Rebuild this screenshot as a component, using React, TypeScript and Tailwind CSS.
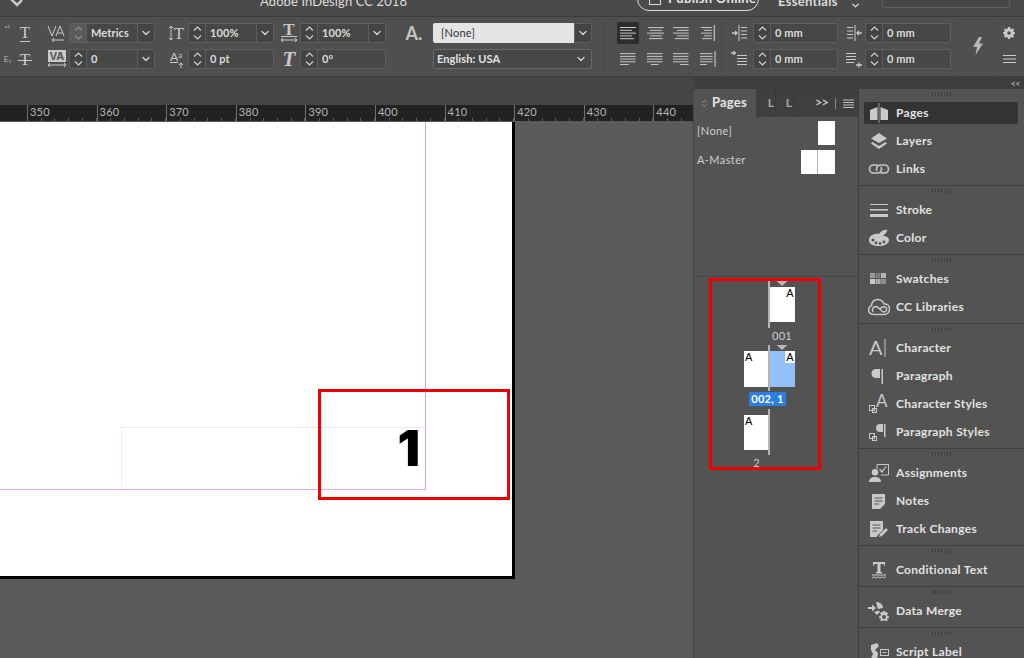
import { ReactNode } from "react";
import { ChevronDown, ChevronsUpDown } from "lucide-react";

const iconFill = "#c9c9c9";

function Spinner({ dim = false }: { dim?: boolean }) {
  return (
    <div className={`w-[17px] h-full flex flex-col items-center justify-center border-r border-[#5e5e5e] rounded-l-[2px] ${dim ? "bg-[#5a5a5a] text-[#8c8c8c]" : "bg-[#444444] text-[#d0d0d0]"}`}>
      <svg width="11" height="16" viewBox="0 0 11 16" fill="none" stroke="currentColor" strokeWidth="1.2">
        <path d="M2 5.5 5.5 2 9 5.5M2 10.5 5.5 14 9 10.5" />
      </svg>
    </div>
  );
}

function Chev() {
  return (
    <div className="w-[17px] h-full flex items-center justify-center border-l border-[#5e5e5e] bg-[#444444]">
      <ChevronDown size={12} strokeWidth={2.5} className="text-[#d8d8d8]" />
    </div>
  );
}

function Field({ value, chevron = false, dim = false, w = 86 }: { value: string; chevron?: boolean; dim?: boolean; w?: number }) {
  return (
    <div style={{ width: w }} className="h-5 flex items-center border border-[#5e5e5e] rounded-[2px] bg-[#474747] overflow-hidden">
      <Spinner dim={dim} />
      <span className="flex-1 pl-[4px] text-[11px] font-bold text-[#dcdcdc] tracking-[0.1px] whitespace-nowrap">{value}</span>
      {chevron && <Chev />}
    </div>
  );
}

function Col({ className = "", children }: { className?: string; children: ReactNode }) {
  return <div className={`flex flex-col gap-[6px] shrink-0 ${className}`}>{children}</div>;
}

function Slot({ children }: { children: ReactNode }) {
  return <div className="h-5 flex items-center justify-center text-[#c9c9c9]">{children}</div>;
}

// text alignment icon, each entry is one line [from, to]
function Lines({ rows, bar }: { rows: number[][]; bar?: boolean }) {
  return (
    <svg width="18" height="16" viewBox="0 0 18 16" stroke={iconFill} strokeWidth="1">
      {rows.map((r, i) => (
        <path key={i} d={`M${r[0]} ${2.5 + i * 2.8}H${r[1]}`} />
      ))}
      {bar && <path d="M16.5 0V16" strokeWidth="1.2" />}
    </svg>
  );
}

function Indent({ flip = false, low = false }: { flip?: boolean; low?: boolean }) {
  return (
    <svg width="18" height="18" viewBox="0 0 18 18" stroke={iconFill} strokeWidth="1" fill="none">
      <g transform={flip ? "translate(18 0) scale(-1 1)" : undefined}>
        {low ? (
          <>
            <path d="M6 5.5H16M6 8.5H16M6 11.5H16M6 14.5H16" />
            <path d="M0 3H5M3 1V5" strokeWidth="1.3" />
          </>
        ) : (
          <>
            <path d="M1 9H6M4 7 6 9 4 11" strokeWidth="1.3" />
            <path d="M8 1V17" />
            <path d="M10 3.5H16M10 7H16M10 10.5H16M10 14H16" />
          </>
        )}
      </g>
    </svg>
  );
}

function ControlBar() {
  return (
    <div className="h-[61px] bg-[#4f4f4f] border-t border-[#3b3b3b] border-b border-b-[#3d3d3d] pt-[6px] flex overflow-hidden shrink-0">
      <Col className="w-[17px] -ml-[3px]">
        <Slot><span className="text-[8px] text-[#bbb] -mt-2 pl-1">ᵃ¹</span></Slot>
        <Slot><span className="text-[8px] text-[#bbb] pl-1">E₁</span></Slot>
      </Col>
      <Col className="w-[16px] ml-[3px]">
        <Slot>
          <span className="text-[17px] leading-none font-['Liberation_Serif',serif] border-b border-[#c9c9c9]">T</span>
        </Slot>
        <Slot>
          <span className="relative text-[17px] leading-none font-['Liberation_Serif',serif]">
            T
            <span className="absolute left-[-2px] right-[-2px] top-[9px] h-px bg-[#c9c9c9]" />
          </span>
        </Slot>
      </Col>
      <Col className="w-[20px] ml-[14px]">
        <Slot>
          <svg width="20" height="20" viewBox="0 0 20 20" fill="none" stroke={iconFill} strokeWidth="1">
            <path d="M1 3 5 13 9 3M9 13 13 3 17 13M10.5 10H15.5M5 17H17M7 15 5 17 7 19" />
          </svg>
        </Slot>
        <Slot>
          <div className="flex flex-col items-center">
            <span className="bg-[#c9c9c9] text-[#4f4f4f] text-[11px] leading-[12px] font-bold px-[2px] font-['Liberation_Sans',sans-serif]">VA</span>
            <svg width="20" height="6" viewBox="0 0 20 6" fill="none" stroke={iconFill}>
              <path d="M1 3H19M3 1 1 3 3 5M17 1 19 3 17 5" />
            </svg>
          </div>
        </Slot>
      </Col>
      <Col className="ml-[2px]">
        <Field value="Metrics" chevron dim />
        <Field value="0" chevron />
      </Col>
      <Col className="w-[18px] ml-[12px]">
        <Slot>
          <div className="flex items-center">
            <svg width="6" height="16" viewBox="0 0 6 16" fill="none" stroke={iconFill}>
              <path d="M3 1V15M1 3 3 1 5 3M1 13 3 15 5 13" />
            </svg>
            <span className="text-[17px] leading-none font-['Liberation_Serif',serif]">T</span>
          </div>
        </Slot>
        <Slot>
          <div className="flex flex-col items-center">
            <div className="flex items-start leading-none">
              <span className="text-[12px] leading-[11px] border-b border-[#c9c9c9]">A</span>
              <span className="text-[8px] leading-[8px]">a</span>
            </div>
            <svg width="18" height="5" viewBox="0 0 18 5" fill="none" stroke={iconFill}>
              <path d="M14 5V0M12 2 14 0 16 2" />
            </svg>
          </div>
        </Slot>
      </Col>
      <Col className="ml-[3px]">
        <Field value="100%" chevron />
        <Field value="0 pt" />
      </Col>
      <Col className="w-[18px] ml-[6px]">
        <Slot>
          <div className="flex flex-col items-center">
            <span className="text-[17px] leading-[13px] font-bold font-['Liberation_Serif',serif] border-b border-[#c9c9c9] px-[2px]">T</span>
            <svg width="18" height="6" viewBox="0 0 18 6" fill="none" stroke={iconFill}>
              <path d="M1 3H17M3 1 1 3 3 5M15 1 17 3 15 5" />
            </svg>
          </div>
        </Slot>
        <Slot>
          <span className="text-[21px] leading-none italic font-bold font-['Liberation_Serif',serif]">T</span>
        </Slot>
      </Col>
      <Col className="ml-[2px]">
        <Field value="100%" chevron />
        <Field value="0°" />
      </Col>
      <Col className="w-[20px] ml-[18px]">
        <Slot>
          <span className="text-[18px] leading-none font-bold font-['Lato',sans-serif] text-[#c4c4c4]">A.</span>
        </Slot>
      </Col>
      <Col className="w-[159px] ml-[9px]">
        <div className="h-5 flex">
          <div className="flex-1 bg-[#e4e4e4] rounded-l-[2px] pl-2 text-[11px] leading-5 tracking-[0.2px] text-[#333]">[None]</div>
          <div className="w-[18px] flex items-center justify-center bg-[#444444] border border-[#5e5e5e] rounded-r-[2px]">
            <ChevronDown size={12} strokeWidth={2.5} className="text-[#d8d8d8]" />
          </div>
        </div>
        <div className="h-5 flex items-center justify-between border border-[#6a6a6a] rounded-[2px] bg-[#474747] pl-[3px] pr-[4px]">
          <span className="text-[11px] font-bold tracking-[0.1px] text-[#e4e4e4]">English: USA</span>
          <ChevronDown size={12} strokeWidth={2.5} className="text-[#d8d8d8]" />
        </div>
      </Col>
      <div className="w-px h-[50px] bg-[#484848] ml-[11px]" />
      <Col className="ml-[12px] w-[100px]">
        <div className="h-5 flex items-center gap-[8px] ml-[1px]">
          <div className="w-[22px] h-[22px] bg-[#2e2e2e] rounded-[2px] flex items-center justify-center">
            <Lines rows={[[1, 17], [1, 13], [1, 17], [1, 13], [1, 15]]} />
          </div>
          <Lines rows={[[1, 17], [3, 15], [0, 18], [3, 15], [2, 16]]} />
          <Lines rows={[[1, 17], [5, 17], [1, 17], [5, 17], [3, 17]]} />
          <Lines rows={[[3, 14], [6, 14], [3, 14], [6, 14], [4, 14]]} bar />
        </div>
        <div className="h-5 flex items-center gap-[9px] pl-[3px]">
          <Lines rows={[[1, 17], [1, 17], [1, 17], [1, 17], [1, 10]]} />
          <Lines rows={[[1, 17], [1, 17], [1, 17], [1, 17], [5, 13]]} />
          <Lines rows={[[1, 17], [1, 17], [1, 17], [1, 17], [8, 17]]} />
          <Lines rows={[[1, 14], [1, 14], [1, 14], [1, 14], [1, 8]]} bar />
        </div>
      </Col>
      <div className="w-px h-[50px] bg-[#484848] ml-[5px]" />
      <Col className="w-[18px] ml-[9px]">
        <Slot><Indent /></Slot>
        <Slot><Indent low /></Slot>
      </Col>
      <Col className="ml-[4px]">
        <Field value="0 mm" w={85} />
        <Field value="0 mm" w={85} />
      </Col>
      <Col className="w-[18px] ml-[7px]">
        <Slot><Indent flip /></Slot>
        <Slot>
          <svg width="18" height="18" viewBox="0 0 18 18" stroke={iconFill} fill="none">
            <path d="M1 3.5H11M1 6.5H11M1 9.5H11M1 12.5H9" />
            <path d="M11 15H17M14 12.5V17.5" strokeWidth="1.3" />
          </svg>
        </Slot>
      </Col>
      <Col className="ml-[2px]">
        <Field value="0 mm" w={86} />
        <Field value="0 mm" w={86} />
      </Col>
      <div className="w-px h-[50px] bg-[#484848] ml-[6px]" />
      <div className="w-[36px] h-[46px] flex items-center justify-center pl-[4px]">
        <svg width="12" height="18" viewBox="0 0 12 18" fill="#b8b8b8">
          <path d="M7 0 1 10H5L3.5 18 11 6.5H7L10 0Z" />
        </svg>
      </div>
      <div className="w-px h-[50px] bg-[#484848]" />
      <Col className="w-[28px] items-center">
        <Slot>
          <svg width="12" height="12" viewBox="0 0 12 12" fill={iconFill}>
            <path fillRule="evenodd" d="M5 0H7L7.3 1.6 8.6 2.2 10 1.3 11 2.4 10.2 3.7 10.7 5 12 5.2V6.8L10.7 7.2 10.2 8.4 11 9.7 10 10.7 8.6 9.9 7.3 10.5 7 12H5L4.7 10.5 3.4 9.9 2 10.7 1 9.7 1.8 8.4 1.3 7.2 0 6.8V5.2L1.3 5 1.8 3.7 1 2.4 2 1.3 3.4 2.2 4.7 1.6ZM6 4.2A1.8 1.8 0 1 0 6 7.8 1.8 1.8 0 1 0 6 4.2Z" />
          </svg>
        </Slot>
        <Slot>
          <svg width="13" height="10" viewBox="0 0 13 10" stroke={iconFill}>
            <path d="M0 1.5H13M0 5H13M0 8.5H13" />
          </svg>
        </Slot>
      </Col>
    </div>
  );
}

function TitleBar() {
  return (
    <div className="h-4 bg-[#4a4a4a] flex items-end overflow-hidden shrink-0">
      <svg width="14" height="8" viewBox="0 0 14 8" className="ml-[10px] mb-[9px]" fill="none" stroke="#c9c9c9" strokeWidth="2.5">
        <path d="M1 0 7 6 12 1" />
      </svg>
      <span className="ml-[236px] w-[150px] text-[13px] leading-4 text-[#dddddd] tracking-[0.1px] whitespace-nowrap mb-[7px]">Adobe InDesign CC 2018</span>
      <div className="ml-[227px] w-[122px] h-[24px] mb-[5px] border border-[#dcdcdc] rounded-full flex items-center pl-[11px] gap-[7px]">
        <div className="w-[12px] h-[12px] border border-[#dcdcdc]" />
        <span className="text-[13px] font-bold text-[#e6e6e6] tracking-[0.3px] whitespace-nowrap">Publish Online</span>
      </div>
      <span className="ml-[19px] w-[72px] text-[13px] leading-4 font-bold text-[#dddddd] tracking-[0.3px] mb-[7px]">Essentials</span>
      <ChevronDown size={11} strokeWidth={3} className="text-[#ddd] mb-[5px]" />
      <div className="ml-[21px] w-[128px] h-[24px] mb-[8px] bg-[#474747] border border-[#5f5f5f] rounded-[2px] flex items-center pl-[24px]">
        <span className="text-[12px] text-[#777] tracking-[0.3px] whitespace-nowrap">Adobe Stock</span>
      </div>
    </div>
  );
}

function Ruler() {
  const marks = [350, 360, 370, 380, 390, 400, 410, 420, 430, 440];
  return (
    <div className="h-4 bg-[#222222] flex overflow-hidden shrink-0">
      <div className="w-[27px] shrink-0" />
      {marks.map(m => (
        <div key={m} className="w-[69.6px] shrink-0 border-l border-[#707070] flex flex-col">
          <span className="h-[13px] pl-[2px] text-[11px] leading-[13px] text-[#b4b4b4] tracking-[0.2px]">{m}</span>
          <div className="flex h-[3px]">
            {[0, 1, 2, 3, 4].map(i => (
              <div key={i} className="w-[13.9px] border-r border-[#5c5c5c]" />
            ))}
          </div>
        </div>
      ))}
    </div>
  );
}

function Canvas() {
  return (
    <div className="flex-1 bg-[#5a5a5a] pt-px overflow-hidden">
      <div className="relative w-[515px] h-[457px] bg-white border-r-[3px] border-b-[3px] border-black">
        <div className="absolute left-[425px] top-0 w-px h-[368px] bg-[#d3a0ff]" />
        <div className="absolute left-0 top-[367px] w-[425px] h-px bg-[#f3a0ff]" />
        <div className="absolute left-[121px] top-[305px] w-[304px] h-[62px] border-l border-t border-[#fbe9dd] flex justify-end pr-[5px]">
          <span className="text-[50px] leading-[40px] font-black text-black font-['Inter',sans-serif]">1</span>
        </div>
        <div className="absolute left-[318px] top-[267px] w-[192px] h-[111px] border-[3px] border-[#f00000]" />
      </div>
    </div>
  );
}

function PageA({ className = "", right = false }: { className?: string; right?: boolean }) {
  return (
    <div className={`w-[25px] flex ${right ? "justify-end" : ""} ${className}`}>
      <span className="h-[12px] bg-white px-px text-[11px] leading-[12px] text-black font-['Liberation_Sans',sans-serif]">A</span>
    </div>
  );
}

function Triangle() {
  return <div className="w-[25px] h-[6px] flex justify-center"><div className="w-[11px] h-[5px] bg-[#b9b9b9] [clip-path:polygon(0_0,100%_0,50%_100%)]" /></div>;
}

function Spine() {
  return <div className="w-[1.5px] h-full -ml-[1px] bg-[#b5b5b5]" />;
}

function PagesPanel() {
  return (
    <div className="w-[165px] shrink-0 flex flex-col border-l border-[#474747]">
      <div className="h-[12px] bg-[#3d3d3d] shrink-0" />
      <div className="h-[28px] bg-[#3f3f3f] flex items-center shrink-0">
        <div className="w-[62px] h-full bg-[#535353] flex items-center pl-[6px] gap-[3px]">
          <ChevronsUpDown size={9} strokeWidth={2} className="text-[#aaa]" />
          <span className="text-[13px] font-bold text-[#e6e6e6] tracking-[0.2px]">Pages</span>
        </div>
        <div className="w-[20px] h-full border-r border-[#383838] flex items-center justify-end pr-[1px] text-[12px] font-bold text-[#a8a8a8]">L</div>
        <div className="w-[18px] h-full border-r border-[#383838] flex items-center justify-end pr-[1px] text-[12px] font-bold text-[#a8a8a8]">L</div>
        <span className="ml-[21px] text-[13px] font-bold text-[#c4c4c4] tracking-[-1px]">&gt;&gt;</span>
        <div className="w-px h-[11px] bg-[#888] ml-[7px]" />
        <svg width="11" height="9" viewBox="0 0 11 9" stroke="#c0c0c0" className="ml-[7px]">
          <path d="M0 1H11M0 3.5H11M0 6H11M0 8.5H11" />
        </svg>
      </div>
      <div className="h-[160px] shrink-0 bg-[#535353] border-b border-[#474747] pt-1 pl-[3px] pr-[23px] flex flex-col gap-[5px]">
        <div className="h-6 flex items-center justify-between">
          <span className="-mt-[3px] text-[11px] tracking-[0.4px] text-[#cfcfcf]">[None]</span>
          <div className="w-[17px] h-6 bg-white" />
        </div>
        <div className="h-6 flex items-center justify-between">
          <span className="-mt-[3px] text-[11px] tracking-[0.4px] text-[#cfcfcf]">A-Master</span>
          <div className="flex">
            <div className="w-[17px] h-6 bg-white border-r border-[#b5b5b5]" />
            <div className="w-[17px] h-6 bg-white" />
          </div>
        </div>
      </div>
      <div className="flex-1 bg-[#535353] pt-[1px] pl-[15px]">
        <div className="w-[112px] h-[192px] border-[3px] border-[#f00000] pl-[32px]">
          <div className="flex h-[47px]">
            <div className="w-[25px]" />
            <Spine />
            <div>
              <Triangle />
              <PageA right className="h-[35px] bg-white" />
            </div>
          </div>
          <div className="ml-[25px] w-[26px] h-[17px] text-center text-[11px] leading-[15px] text-[#d0d0d0] tracking-[0.3px]">001</div>
          <div className="flex h-[46px]">
            <div className="pt-[6px]">
              <PageA className="h-[36px] bg-white" />
            </div>
            <Spine />
            <div>
              <Triangle />
              <PageA right className="h-[36px] bg-[#93c0f8]" />
            </div>
          </div>
          <div className="mt-px ml-[5px] w-[37px] h-[14px] bg-[#2a7fe0] text-center text-[11px] leading-[14px] font-bold text-white tracking-[0.3px]">002, 1</div>
          <div className="mt-[3px] flex h-[46px]">
            <div className="pt-[6px]">
              <PageA className="h-[35px] bg-white" />
            </div>
            <Spine />
          </div>
          <div className="w-[25px] h-[15px] text-center text-[11px] leading-[15px] text-[#d0d0d0]">2</div>
        </div>
      </div>
    </div>
  );
}

const Svg = ({ children }: { children: ReactNode }) => (
  <svg width="22" height="20" viewBox="0 0 22 20" fill={iconFill} stroke="none">{children}</svg>
);

const smallBoxes = (
  <g fill="none" stroke={iconFill} strokeWidth="1">
    <rect x="1.5" y="11.5" width="5" height="5" />
    <rect x="4.5" y="14.5" width="4" height="4" />
  </g>
);

const icons: Record<string, ReactNode> = {
  Pages: (
    <Svg>
      <path d="M2 7 9.5 4V17H2ZM20 7 12.5 4V17H20Z" />
      <path d="M11 0V20" stroke={iconFill} strokeWidth="0.7" />
    </Svg>
  ),
  Layers: (
    <Svg>
      <path d="M11 2 19 7.5 11 12 3 7.5Z" />
      <path d="M4.5 11 3 12.5 11 18 19 12.5 17.5 11 11 15Z" />
    </Svg>
  ),
  Links: (
    <Svg>
      <g fill="none" stroke={iconFill} strokeWidth="1.6">
        <path d="M9.5 6H5.5A4 4 0 0 0 5.5 14H10A4 4 0 0 0 13 8" />
        <path d="M12.500 14H16.500A4 4 0 0 0 16.500 6H12A4 4 0 0 0 9 12" />
      </g>
    </Svg>
  ),
  Stroke: (
    <Svg>
      <rect x="2" y="4" width="18" height="1" />
      <rect x="2" y="9" width="18" height="1.6" />
      <rect x="2" y="14" width="18" height="3" />
    </Svg>
  ),
  Color: (
    <Svg>
      <path d="M1 12C1 7 7 5 11 6 13 3 17 1 19 2 20 3 17 6 15 8 19 8 21 10 21 12 21 16 16 18 11 18 5 18 1 16 1 12Z" />
      <g fill="#535353">
        <circle cx="5" cy="12" r="1.6" />
        <circle cx="8" cy="15" r="1.4" />
        <circle cx="12" cy="15.5" r="1.4" />
        <circle cx="16" cy="14" r="1.4" />
      </g>
    </Svg>
  ),
  Swatches: (
    <Svg>
      <rect x="2" y="4" width="5" height="5" fill="#9a9a9a" />
      <rect x="7.5" y="4" width="5" height="5" fill="#7c7c7c" />
      <rect x="13" y="4" width="5" height="5" fill="#b4b4b4" />
      <rect x="2" y="10" width="5" height="5" fill="#c9c9c9" />
      <rect x="7.5" y="10" width="5" height="5" fill="#a8a8a8" />
      <rect x="13" y="10" width="5" height="5" fill="#8c8c8c" />
    </Svg>
  ),
  "CC Libraries": (
    <Svg>
      <g fill="none" stroke={iconFill} strokeWidth="1.5">
        <path d="M7 17.500H16C19 17.500 21.500 15.500 21.500 12 21.500 8.500 19 6.500 16 7 15 3.500 11 1.500 7.500 3 5 4 3.500 6.500 3.500 8.500 1.500 9.500 0.500 11.500 0.500 13 0.500 16 3.500 17.500 7 17.500Z" />
        <path d="M5 15C3.500 13 4.500 9.500 8 9.500 11 9.500 13 15 16 15 18.500 15 19.500 12 18 10.500 16.500 9 13.500 9.500 12 12" />
      </g>
    </Svg>
  ),
  Character: (
    <Svg>
      <text x="1" y="17" fontSize="20" fontFamily="Lato, sans-serif">A</text>
      <path d="M17 1V19" stroke={iconFill} strokeWidth="1" />
    </Svg>
  ),
  Paragraph: (
    <Svg>
      <path d="M9 3H12V12H9C5 12 3.500 10 3.500 7.500 3.500 5 5 3 9 3Z" />
      <path d="M13.500 3H15V18H13.500Z" />
    </Svg>
  ),
  "Character Styles": (
    <Svg>
      {smallBoxes}
      <text x="8" y="13" fontSize="17" fontFamily="Lato, sans-serif">A</text>
    </Svg>
  ),
  "Paragraph Styles": (
    <Svg>
      {smallBoxes}
      <path d="M12 2H15V10H12C9.500 10 8 8.500 8 6 8 3.500 9.500 2 12 2Z" />
      <path d="M16 2H17.500V15H16Z" />
    </Svg>
  ),
  Assignments: (
    <Svg>
      <path d="M7 6A3.200 3.200 0 0 1 7 12.500 3.200 3.200 0 0 1 7 6ZM1 19C1 15.500 3.500 14 7 14 10.500 14 13 15.500 13 19Z" />
      <path d="M9 6V1.500H20.500V12H13" fill="none" stroke={iconFill} strokeWidth="1" />
      <path d="M11.500 6 14 9 18 3.500" fill="none" stroke={iconFill} strokeWidth="1.200" />
    </Svg>
  ),
  Notes: (
    <Svg>
      <path d="M4 3H17V13L12 18H4Z" />
      <path d="M6.500 7H14.500M6.500 10H14.500M6.500 13H11" stroke="#535353" strokeWidth="1.200" />
    </Svg>
  ),
  "Track Changes": (
    <Svg>
      <path d="M2 2H15V11L9 17V18H2Z" />
      <path d="M4.500 6H12.500M4.500 9H12.500M4.500 12H9" stroke="#535353" strokeWidth="1.200" />
      <path d="M11 18 12 15 18 9 20 11 14 17Z" />
    </Svg>
  ),
  "Conditional Text": (
    <Svg>
      <path d="M5 2H17V5.500H16L15.500 4H12.500V12H14V13.500H8V12H9.500V4H6.500L6 5.500H5Z" />
      <path d="M4 15H18" stroke={iconFill} strokeWidth="1" />
      <path d="M4 18 6 16.800 8 18 10 16.800 12 18 14 16.800 16 18 18 16.800" fill="none" stroke={iconFill} strokeWidth="0.900" />
    </Svg>
  ),
  "Data Merge": (
    <Svg>
      <path d="M0 6H4V3.500L8 7 4 10.500V8H0Z" />
      <path d="M8 1C12 1 15 3.500 15 7L10 8 9 5Z" />
      <path fillRule="evenodd" d="M15 10 17 10 17.300 11.500 18.800 11 20 12.500 19 13.800 19.500 15 21 15.500V17L19.500 17.500 19 18.700 20 20H18L17 19.500H15L14 20H12L13 18.700 12.500 17.500 11 17V15.500L12.500 15 13 13.800 12 12.500 13.200 11 14.700 11.500ZM16 14A2 2 0 1 0 16 18 2 2 0 1 0 16 14Z" />
      <path d="M6 11 11 9.500 12 11 9 14Z" />
    </Svg>
  ),
  "Script Label": (
    <Svg>
      <path d="M3 3 9 1 11 4 7 8 10 11 9 18 2 19 5 12 3 8Z" />
      <rect x="12.500" y="7.500" width="8" height="6" fill="none" stroke={iconFill} />
      <path d="M14.500 10.500H18.500" stroke={iconFill} />
    </Svg>
  ),
};

const sections = [
  ["Pages", "Layers", "Links"],
  ["Stroke", "Color"],
  ["Swatches", "CC Libraries"],
  ["Character", "Paragraph", "Character Styles", "Paragraph Styles"],
  ["Assignments", "Notes", "Track Changes"],
  ["Conditional Text"],
  ["Data Merge"],
  ["Script Label"],
];

function Dock() {
  return (
    <div className="w-[166px] shrink-0 flex flex-col border-l border-[#3c3c3c] bg-[#535353] overflow-hidden">
      <div className="h-[12px] bg-[#3d3d3d] shrink-0 flex items-center justify-end pr-[4px]">
        <span className="text-[9px] leading-none font-bold text-[#a8a8a8] tracking-[-0.5px]">&lt;&lt;</span>
      </div>
      {sections.map(items => (
        <div key={items[0]} className="shrink-0 border-b border-[#3f3f3f] pb-[2px]">
          <div className="h-[10px] flex items-center justify-center">
            <div className="w-5 h-[4px] bg-[repeating-linear-gradient(90deg,#3f3f3f_0_1px,transparent_1px_3px)]" />
          </div>
          {items.map(name => (
            <div key={name} className="h-7 flex items-center">
              <div className={`w-[154px] h-[22px] ml-[5px] pl-[4px] flex items-center rounded-[2px] ${name === "Pages" ? "bg-[#333333]" : ""}`}>
                <div className="w-[22px] h-5 shrink-0">{icons[name]}</div>
                <span className="ml-[6px] text-[12px] font-bold text-[#e2e2e2] tracking-[0.3px] whitespace-nowrap">{name}</span>
              </div>
            </div>
          ))}
        </div>
      ))}
    </div>
  );
}

export default function App() {
  return (
    <div className="w-[1024px] h-[658px] overflow-hidden flex flex-col bg-[#454545] font-['Lato',sans-serif]">
      <TitleBar />
      <ControlBar />
      <div className="flex-1 flex min-h-0">
        <div className="flex-1 flex flex-col min-w-0">
          <div className="h-[28px] bg-[#454545] shrink-0" />
          <Ruler />
          <Canvas />
        </div>
        <PagesPanel />
        <Dock />
      </div>
    </div>
  );
}
